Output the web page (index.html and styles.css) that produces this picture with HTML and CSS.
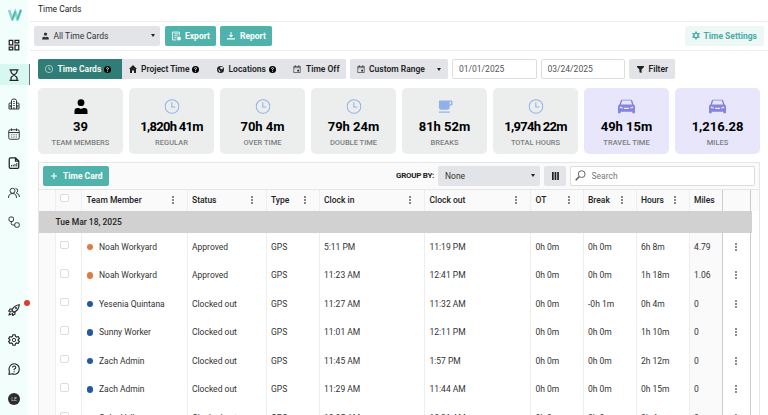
FILE: index.html
```html
<!DOCTYPE html>
<html lang="en">
  <head>
    <meta charset="UTF-8" />
    <meta name="viewport" content="width=device-width, initial-scale=1.0" />
    <title>Time Cards</title>
    <link rel="stylesheet" href="styles.css">
  </head>
  <body>
    <!-- Icons that are used more than once -->
    <svg class="hidden">
      <symbol id="user" viewBox="0 0 14 15"><circle cx="7" cy="3.700" r="3.400" /><path d="M.5 15v-3q0-3 3-3h1.200l2.300 1L9.300 9h1.200q3 0 3 3v3z" /></symbol>
      <symbol id="clock" viewBox="0 0 16 16"><g fill="none" stroke="currentColor" stroke-width="1.100"><circle cx="8" cy="8" r="7.300" /><path d="M7.800 3.500v5h3.700" /></g></symbol>
      <symbol id="help" viewBox="0 0 16 16"><circle cx="8" cy="8" r="8" /><path d="M5.500 6q.2-2.300 2.500-2.300T10.500 6Q10.500 7.300 8 8v1.700M8 11v2" fill="none" stroke="#fff" stroke-width="2" /></symbol>
      <symbol id="calendar" viewBox="0 0 16 16"><path d="M1.500 3h13v12h-13zM1.500 5.500h13M4.500 0v4M11.500 0v4" fill="none" stroke="currentColor" stroke-width="1.200" /><path d="M8.500 9.500h3.500V13H8.500z" /></symbol>
      <symbol id="car" viewBox="0 0 18 15"><path fill-rule="evenodd" d="M4.500 0h9q1.200 0 1.600 1.200L16.400 5Q18 5.800 18 7.500V15h-2.800v-2H2.800v2H0V7.500Q0 5.800 1.600 5l1.300-3.800Q3.300 0 4.500 0zM4.500 1.200 3.100 5.300h11.800l-1.400-4.100zM2 7.500v1.600l3 .6V8.300zM16 7.500l-3 .8v1.400l3-.6zM6.300 8.800v1.400h5.400V8.800z" /></symbol>
      <symbol id="dots" viewBox="0 0 2 8"><path d="M.3.300h1.400v1.400H.3zM.3 3.300h1.400v1.400H.3zM.3 6.300h1.400v1.400H.3z" /></symbol>
    </svg>

    <nav class="sidebar">
      <a class="logo"><svg viewBox="0 0 14 12" width="14" height="12"><path d="M1 1l3.300 9.500L7.300 3l2.200 7.500L13 .8" fill="none" stroke="#8ad6cc" stroke-width="2.600" /><path d="M4.300 10.500 7.300 2.500M9.500 10.500 13 .8" fill="none" stroke="#45b3a9" stroke-width="1.500" /></svg></a>
      <a><svg class="line" viewBox="0 0 24 24"><path d="M2.500 2.500h7v9h-7zM14 2.500h7.500v5H14zM14 12h7.500v9.500H14zM2.500 16h7v5.500h-7z" stroke-width="2.500" /></svg></a>
      <a class="active"><svg class="line" viewBox="0 0 24 24"><path d="M3 1.500h18M3 22.500h18M6 1.500v4q0 2.500 6 6.500 6-4 6-6.500v-4M6 22.500v-4q0-2.500 6-6.500 6 4 6 6.500v4" stroke-width="2.500" /></svg></a>
      <a><svg class="line" viewBox="0 0 24 24"><path d="M7 22V5q0-3 5-3t5 3v17M7 10H4q-2 0-2 2v10h20V12q0-2-2-2h-3M10.500 7h3M10.500 11h3M10.500 15h3M12 18v4M4.500 14v5M19.500 14v5" /></svg></a>
      <a><svg class="line" viewBox="0 0 24 24"><rect x="1.500" y="3.500" width="21" height="19" rx="3" /><path d="M1.500 9h21M7 1v5M17 1v5M6.500 13.500h2M11 13.500h2M15.500 13.500h2M6.500 18h2M11 18h2M15.500 18h2" /></svg></a>
      <a><svg class="line" viewBox="0 0 24 24"><path d="M15 1.500H5q-2.500 0-2.500 2.500v16q0 2.500 2.500 2.500h14q2.500 0 2.500-2.500V8zM15 1.500V8h6.500" stroke-width="2.500" /><path d="M7 19v-3M10.500 19v-4M14 19v-5M17.500 19v-7" /></svg></a>
      <a><svg class="line" viewBox="0 0 24 24"><circle cx="9" cy="7.500" r="5" /><path d="M1 22q0-9 8-9t8 9M15 2.800q5 .5 4.500 5-.3 2.500-3 4 6.500 1.700 6.500 8.200" /></svg></a>
      <a class="grow"><svg class="line" viewBox="0 0 24 24"><rect x="2" y="2" width="9" height="9" rx="3" /><rect x="13.500" y="13.500" width="9" height="9" rx="3" /><path d="M6.500 11v4q0 3 3 3h4" /></svg></a>
      <a><svg class="line" viewBox="0 0 24 24"><path d="M8 13q3-10 14.500-11.500Q22 12.500 11.500 16.500zM9 10H4l-2.500 4L7 15M14 15.500V20l-4.500 3-1-5.500M5 17q-2.500 1-3 5 3.500-.5 5-2.500" stroke-width="2.200" /><circle cx="16" cy="8" r="1.700" /></svg><i class="badge"></i></a>
      <a><svg class="line" viewBox="0 0 24 24"><circle cx="12" cy="12" r="3.300" /><path d="M9.800 1.500h4.400l.8 3.200 2.300 1.400 3.200-1 2.200 3.900-2.400 2.200v1.600l2.400 2.200-2.200 3.900-3.200-1-2.300 1.400-.8 3.200H9.800L9 19.300l-2.300-1.400-3.200 1L1.300 15l2.400-2.200v-1.600L1.300 9l2.200-3.900 3.200 1L9 4.700z" stroke-width="2.200" /></svg></a>
      <a><svg class="line" viewBox="0 0 24 24"><path d="M2 22.500l.8-6Q.5 11 4.500 5.500T15 2q7.500 2.500 7.500 10T16 22q-4 1-7-.5z" stroke-width="2.200" /><path d="M9 9q.3-3 3.300-3t3.300 3q0 2-3.300 3.500v2M12.300 16.500v2" stroke-width="2.200" /></svg></a>
      <a><span class="avatar">LE</span></a>
    </nav>

    <main>
      <h1>Time Cards</h1>

      <div class="toolbar">
        <button class="btn select all-cards"><svg viewBox="0 0 14 15" width="7" height="8"><use href="#user" /></svg>All Time Cards<i class="caret"></i></button>
        <button class="btn teal export"><svg viewBox="0 0 16 16" width="9" height="10"><path d="M13 7V1H1v14h7M4 4h7M4 7.500h6M4 11h4" fill="none" stroke="currentColor" stroke-width="1.500" /><circle cx="12.500" cy="12.500" r="3.500" /></svg>Export</button>
        <button class="btn teal report"><svg viewBox="0 0 16 16" width="8" height="8"><path d="M7 0h2v6h3.500L8 11 3.500 6H7zM0 12.500h16V15H0z" /></svg>Report</button>
        <button class="btn settings"><svg viewBox="0 0 16 16" width="8" height="9"><g fill="none" stroke="currentColor" stroke-width="3"><circle cx="8" cy="8" r="4.300" /><path d="M8 0v3M8 13v3M1 4l2.700 1.500M12.300 10.500 15 12M1 12l2.700-1.500M12.300 5.500 15 4" /></g></svg>Time Settings</button>
      </div>

      <div class="filters">
        <div class="tabs">
          <button class="tab current tab-cards"><svg viewBox="0 0 16 16" width="8" height="8"><use href="#clock" /></svg>Time Cards<svg class="help" viewBox="0 0 16 16"><use href="#help" /></svg></button>
          <button class="tab tab-project"><svg viewBox="0 0 16 16" width="8" height="8"><path d="M8 0l8 8h-2v8h-4v-5H6v5H2V8H0z" /></svg>Project Time<svg class="help" viewBox="0 0 16 16"><use href="#help" /></svg></button>
          <button class="tab tab-locations"><svg viewBox="0 0 16 16" width="7" height="7"><circle cx="8" cy="8" r="8" /><path d="M8 1.500 14 3l-2 5-3-1-2-2zM2 6l4 3 2 4-2 1z" fill="#e2e4e8" /></svg>Locations<svg class="help" viewBox="0 0 16 16"><use href="#help" /></svg></button>
          <button class="tab tab-off"><svg viewBox="0 0 16 16" width="8" height="8"><use href="#calendar" /></svg>Time Off</button>
        </div>
        <button class="tab range"><svg viewBox="0 0 16 16" width="8" height="8"><use href="#calendar" /></svg>Custom Range<i class="caret"></i></button>
        <input class="date" value="01/01/2025" />
        <input class="date" value="03/24/2025" />
        <button class="tab filter"><svg viewBox="0 0 16 16" width="7" height="7"><path d="M0 0h16v2l-5.500 6v8l-5-2V8L0 2z" /></svg>Filter</button>
      </div>

      <div class="cards">
        <div class="card"><svg class="person" viewBox="0 0 14 15"><use href="#user" /></svg><b>39</b><span>TEAM MEMBERS</span></div>
        <div class="card"><svg viewBox="0 0 16 16"><use href="#clock" /></svg><b class="long">1,820h 41m</b><span>REGULAR</span></div>
        <div class="card"><svg viewBox="0 0 16 16"><use href="#clock" /></svg><b>70h 4m</b><span>OVER TIME</span></div>
        <div class="card"><svg viewBox="0 0 16 16"><use href="#clock" /></svg><b>79h 24m</b><span>DOUBLE TIME</span></div>
        <div class="card"><svg viewBox="0 0 16 16"><path fill-rule="evenodd" d="M1.500 1.500h13q1.500 0 1.500 1.500v2.500Q16 7 14.500 7H13v2q0 2.500-2.500 2.500H4Q1.500 11.500 1.500 9zM13 3v2.700h1.500V3zM1.500 13.300H13v1.400H1.500z" /></svg><b>81h 52m</b><span>BREAKS</span></div>
        <div class="card"><svg viewBox="0 0 16 16"><use href="#clock" /></svg><b class="long">1,974h 22m</b><span>TOTAL HOURS</span></div>
        <div class="card travel"><svg viewBox="0 0 18 15"><use href="#car" /></svg><b>49h 15m</b><span>TRAVEL TIME</span></div>
        <div class="card travel"><svg viewBox="0 0 18 15"><use href="#car" /></svg><b>1,216.28</b><span>MILES</span></div>
      </div>

      <section class="grid">
        <div class="grid-bar">
          <button class="btn teal add"><svg viewBox="0 0 10 10" width="6" height="6"><path d="M5 0v10M0 5h10" stroke="currentColor" stroke-width="1.800" /></svg>Time Card</button>
          <strong>GROUP BY:</strong>
          <button class="btn select group">None<i class="caret"></i></button>
          <button class="btn columns"><svg viewBox="0 0 7 8" width="7" height="8"><path d="M0 0h1.700v8H0zM2.600 0h1.700v8H2.600zM5.200 0h1.700v8H5.200z" /></svg></button>
          <label class="search"><svg viewBox="0 0 12 12" width="11" height="11"><g fill="none" stroke="#555"><circle cx="7.300" cy="4.500" r="3.700" /><path d="M4.500 7.300.8 11.200" stroke-width="1.500" /></g></svg><input placeholder="Search" /></label>
        </div>
        <div class="row head">
          <span></span><span><i class="check"></i></span>
          <span>Team Member<svg class="dots"><use href="#dots" /></svg></span>
          <span>Status<svg class="dots"><use href="#dots" /></svg></span>
          <span>Type<svg class="dots"><use href="#dots" /></svg></span>
          <span>Clock in<svg class="dots"><use href="#dots" /></svg></span>
          <span>Clock out<svg class="dots"><use href="#dots" /></svg></span>
          <span>OT<svg class="dots"><use href="#dots" /></svg></span>
          <span>Break<svg class="dots"><use href="#dots" /></svg></span>
          <span>Hours<svg class="dots"><use href="#dots" /></svg></span>
          <span>Miles</span><span></span><span></span>
        </div>
        <div class="group-row"><b>Tue Mar 18, 2025</b></div>
        <div id="rows"></div>
      </section>
    </main>

    <script>
      var entries = [
        ["Noah Workyard", "Approved", "GPS", "5:11 PM", "11:19 PM", "0h 0m", "0h 0m", "6h 8m", "4.79"],
        ["Noah Workyard", "Approved", "GPS", "11:23 AM", "12:41 PM", "0h 0m", "0h 0m", "1h 18m", "1.06"],
        ["Yesenia Quintana", "Clocked out", "GPS", "11:27 AM", "11:32 AM", "0h 0m", "-0h 1m", "0h 4m", "0"],
        ["Sunny Worker", "Clocked out", "GPS", "11:01 AM", "12:11 PM", "0h 0m", "0h 0m", "1h 10m", "0"],
        ["Zach Admin", "Clocked out", "GPS", "11:45 AM", "1:57 PM", "0h 0m", "0h 0m", "2h 12m", "0"],
        ["Zach Admin", "Clocked out", "GPS", "11:29 AM", "11:44 AM", "0h 0m", "0h 0m", "0h 15m", "0"],
        ["Gabe Velke", "Clocked out", "GPS", "10:05 AM", "10:31 AM", "0h 0m", "0h 0m", "0h 4m", "0"]
      ];

      document.querySelector("#rows").innerHTML = entries.map(function (entry) {
        var cells = entry.map(function (text, i) {
          var dot = i === 0 ? '<i class="dot ' + (entry[1] === "Approved" ? "approved" : "") + '"></i>' : "";
          return "<span>" + dot + text + "</span>";
        });
        return '<div class="row"><span></span><span><i class="check"></i></span>' + cells.join("") +
          '<span><svg class="dots"><use href="#dots" /></svg></span><span></span></div>';
      }).join("");
    </script>
  </body>
</html>
```
FILE: styles.css
```css
*,
*::before,
*::after {
  box-sizing: border-box;
}

body {
  display: flex;
  height: 415px;
  margin: 0;
  overflow: hidden;
  background: #fff;
  color: #222;
  font: 8.500px/12px Roboto, sans-serif;
}

svg {
  display: block;
  flex: none;
  fill: currentColor;
}

button,
input {
  margin: 0;
  padding: 0;
  border: 0;
  color: inherit;
  font: inherit;
}

.hidden {
  display: none;
}

/* Sidebar */
.sidebar {
  display: flex;
  flex: none;
  flex-direction: column;
  width: 30px;
  height: 415px;
  background: linear-gradient(90deg, #f1fefb 26px, #fff);
}

.sidebar a {
  position: relative;
  display: flex;
  flex: none;
  align-items: center;
  justify-content: center;
  height: 21px;
  margin-bottom: 8.500px;
  padding-right: 2px;
}

.sidebar .logo {
  height: 30px;
  margin-bottom: 4.500px;
  padding-right: 0;
}

.sidebar .active {
  padding-right: 1px;
  border-right: 1.500px solid #777;
  background: #d6f8f1;
}

.sidebar .grow {
  margin-bottom: auto;
}

.sidebar a:last-child {
  margin-bottom: 6px;
}

.line {
  width: 12px;
  height: 12px;
  fill: none;
  stroke: #222;
  stroke-width: 1.800;
}

.badge {
  position: absolute;
  top: 0;
  left: 24px;
  width: 6px;
  height: 6px;
  border-radius: 50%;
  background: #e13b2d;
}

.avatar {
  width: 12px;
  height: 12px;
  border-radius: 50%;
  background: #2b2d2f;
  color: #ccc;
  font-size: 5px;
  text-align: center;
}

/* Top of the page */
main {
  width: 736px;
  flex: 1;
}

h1 {
  height: 21.500px;
  margin: 0;
  padding: 3px 8px 0;
  border-bottom: 1px solid #eee;
  font-size: 8.500px;
  font-weight: 400;
}

.toolbar {
  display: flex;
  align-items: center;
  height: 29.500px;
  padding: 0 4.500px 0 4px;
  border-bottom: 1px solid #eee;
}

.btn {
  display: flex;
  align-items: center;
  height: 20px;
  padding: 0 7px;
  border-radius: 2px;
  white-space: nowrap;
}

.select {
  background: #e2e4e8;
  color: #333;
}

.caret {
  margin-left: auto;
  border: 2px solid transparent;
  border-top: 3.500px solid #222;
  border-bottom: 0;
}

.all-cards {
  width: 126px;
  margin-right: 5px;
  padding: 0 5px 0 7.500px;
  gap: 5px;
}

.teal {
  background: #4fb3ac;
  color: #fff;
  font-weight: 700;
}

.export {
  width: 51px;
  margin-right: 4px;
  gap: 4px;
}

.report {
  width: 52px;
  gap: 5px;
}

.settings {
  width: 79px;
  margin-left: auto;
  background: #edf7f5;
  color: #49aca5;
  font-weight: 700;
  gap: 4px;
}

.filters {
  display: flex;
  gap: 4px;
  padding: 8px 8px 9px;
}

.tabs {
  display: flex;
  width: 308px;
  border-radius: 2px;
  background: #e2e4e8;
  overflow: hidden;
}

.tab {
  display: flex;
  flex: none;
  align-items: center;
  height: 20px;
  padding: 0 7px;
  background: #e2e4e8;
  font-weight: 600;
  gap: 4px;
  white-space: nowrap;
}

.tab .help {
  width: 7px;
  height: 7px;
  margin-left: -1.500px;
  color: #000;
}

.current {
  background: #2f7d76;
  color: #fff;
}

.tab-cards {
  width: 84px;
  gap: 4.500px;
}

.tab-project {
  width: 87.500px;
}

.tab-locations {
  width: 76.500px;
  gap: 5px;
}

.tab-off {
  gap: 5px;
}

.range {
  width: 98px;
  border-radius: 2px;
}

.date {
  width: 84.500px;
  height: 20px;
  padding: 0 6px;
  border: 1px solid #ddd;
  border-radius: 2px;
  color: #555;
}

.filter {
  width: 46px;
  padding-left: 7.500px;
  border-radius: 2px;
  gap: 5px;
}

/* Totals */
.cards {
  display: grid;
  grid-template-columns: repeat(8, 85px);
  gap: 6px;
  padding: 0 8px;
}

.card {
  display: flex;
  flex-direction: column;
  align-items: center;
  height: 66px;
  padding-top: 11px;
  border-radius: 5px;
  background: #eceeee;
}

.card svg {
  width: 16px;
  height: 15px;
  color: #8fb1e8;
}

.card .person {
  width: 14px;
  color: #000;
}

.card b {
  margin-top: 5px;
  color: #000;
  font-size: 13px;
  line-height: 16px;
  white-space: nowrap;
}

.card .long {
  letter-spacing: -0.700px;
}

.card span {
  margin-top: 2px;
  color: #7d7f80;
  font-size: 7.500px;
  font-weight: 500;
  line-height: 12px;
}

.card.travel {
  background: #e7e6fa;
}

.travel svg {
  width: 17px;
  color: #8784df;
}

/* Data grid */
.grid {
  width: 722px;
  margin: 8px 0 0 8px;
  border: 1px solid #e6e6e6;
  border-bottom: 0;
}

.grid-bar {
  display: flex;
  align-items: center;
  height: 25.500px;
  padding: 0 4px;
  background: #fafafa;
}

.add {
  width: 66px;
  padding: 0 8px;
  gap: 6px;
}

.grid-bar strong {
  margin-left: auto;
  margin-right: 4px;
  font-size: 8px;
  font-weight: 700;
  letter-spacing: -0.300px;
}

.group {
  width: 102px;
  padding: 0 5px 0 7px;
}

.columns {
  justify-content: center;
  width: 22px;
  margin: 0 4px;
  background: #e2e4e8;
}

.search {
  display: flex;
  align-items: center;
  width: 185px;
  height: 20px;
  padding-left: 4px;
  border: 1px solid #ddd;
  border-radius: 2px;
  background: #fff;
  gap: 5.500px;
}

.search input {
  width: 120px;
  background: none;
}

.search input::placeholder {
  color: #777;
}

.row {
  display: grid;
  grid-template-columns: 16.500px 26.500px 105.500px 79px 53px 105.500px 106px 52.500px 53px 53px 33px 28.500px 8px;
  height: 28.500px;
}

.row > span {
  display: flex;
  align-items: center;
  padding-left: 4.500px;
  border-right: 1px solid #eee;
  color: #333;
  white-space: nowrap;
}

.row > span:first-child,
.row > span:nth-child(11) {
  background: #fafafa;
}

.row > span:nth-child(11),
.row > span:nth-child(12) {
  border-color: #ccc;
}

.row > span:last-child {
  border-right: 0;
}

.row > span:nth-child(12) {
  padding-left: 12.500px;
}

.head {
  height: 22px;
  border-top: 1px solid #e6e6e6;
  background: #fafafa;
}

.head > span {
  color: #222;
  font-weight: 500;
}

.check {
  width: 8.500px;
  height: 8.500px;
  margin-bottom: 4px;
  border: 1px solid #ddd;
  border-radius: 2px;
  background: #fff;
}

.dots {
  width: 2px;
  height: 8px;
  color: #222;
}

.head .dots {
  margin-left: auto;
  margin-right: 13px;
}

.group-row {
  display: flex;
  align-items: center;
  width: 712.500px;
  height: 22px;
  padding-left: 16.500px;
  background: #d1d1d1;
}

.group-row b {
  font-weight: 500;
}

.dot {
  width: 6.500px;
  height: 6.500px;
  margin-right: 6px;
  border-radius: 50%;
  background: #27579c;
}

.approved {
  background: #dc7c43;
}
```
